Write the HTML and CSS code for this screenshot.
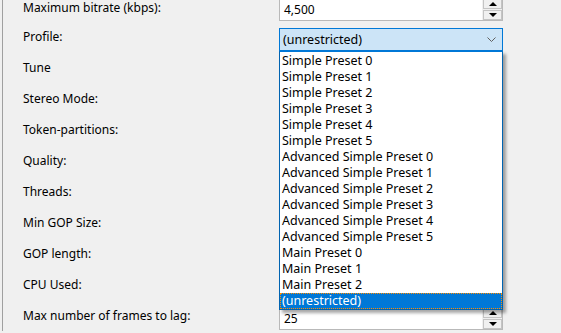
FILE: index.html
```html
<!DOCTYPE html>
<html lang="en">
<head>
    <meta charset="UTF-8">
    <meta name="viewport" content="width=device-width, initial-scale=1.0">
    <title>Encoder Settings</title>
    <link rel="stylesheet" href="styles.css">
</head>
<body>
    <div class="panel">
        <div class="form">
            <div class="row first">
                <label class="label">Maximum bitrate (kbps):</label>
                <div class="spin">
                    <span class="spin-value">4,500</span>
                    <span class="spin-buttons">
                        <span class="spin-btn"><span class="arrow up"></span></span>
                        <span class="spin-btn"><span class="arrow down"></span></span>
                    </span>
                </div>
            </div>
            <div class="row">
                <label class="label">Profile:</label>
                <div class="combo">
                    <div class="combo-head">
                        <span>(unrestricted)</span>
                        <svg class="chevron" width="9" height="5" viewBox="0 0 9 5">
                            <path d="M0.5 0.5 L4.5 4.5 L8.5 0.5" fill="none" stroke="#606060" stroke-width="1"/>
                        </svg>
                    </div>
                    <ul class="combo-list">
                        <li>Simple Preset 0</li>
                        <li>Simple Preset 1</li>
                        <li>Simple Preset 2</li>
                        <li>Simple Preset 3</li>
                        <li>Simple Preset 4</li>
                        <li>Simple Preset 5</li>
                        <li>Advanced Simple Preset 0</li>
                        <li>Advanced Simple Preset 1</li>
                        <li>Advanced Simple Preset 2</li>
                        <li>Advanced Simple Preset 3</li>
                        <li>Advanced Simple Preset 4</li>
                        <li>Advanced Simple Preset 5</li>
                        <li>Main Preset 0</li>
                        <li>Main Preset 1</li>
                        <li>Main Preset 2</li>
                        <li class="selected">(unrestricted)</li>
                    </ul>
                </div>
            </div>
            <div class="row"><label class="label">Tune</label></div>
            <div class="row"><label class="label">Stereo Mode:</label></div>
            <div class="row"><label class="label">Token-partitions:</label></div>
            <div class="row"><label class="label">Quality:</label></div>
            <div class="row"><label class="label">Threads:</label></div>
            <div class="row"><label class="label">Min GOP Size:</label></div>
            <div class="row"><label class="label">GOP length:</label></div>
            <div class="row"><label class="label">CPU Used:</label></div>
            <div class="row">
                <label class="label">Max number of frames to lag:</label>
                <div class="spin">
                    <span class="spin-value">25</span>
                    <span class="spin-buttons">
                        <span class="spin-btn"><span class="arrow up"></span></span>
                        <span class="spin-btn"><span class="arrow down"></span></span>
                    </span>
                </div>
            </div>
        </div>
    </div>
</body>
</html>
```

FILE: styles.css
```css
html, body {
    margin: 0;
    padding: 0;
    height: 100%;
    overflow: hidden;
    background-color: #f0f0f0;
}
body {
    font-family: "Noto Sans", "Liberation Sans", sans-serif;
    font-size: 12px;
    color: #000;
}
.panel {
    margin-left: 2px;
    border-left: 1px solid #a0a0a0;
    height: 100%;
}
.form {
    margin-top: -2px;
    padding-left: 20px;
}
.row {
    display: grid;
    grid-template-columns: 256px 224px;
    align-items: start;
    height: 31px;
}
.row.first {
    height: 30px;
}
.label {
    padding-top: 1px;
    line-height: 16px;
    white-space: nowrap;
}
.row.first .label {
    padding-top: 2px;
}
.spin {
    height: 23px;
    box-sizing: border-box;
    border: 1px solid #b9b9b9;
    background: #fff;
    display: flex;
    align-items: stretch;
}
.spin-value {
    flex: 1;
    padding-left: 4px;
    line-height: 21px;
}
.spin-buttons {
    width: 19px;
    background: #f0f0f0;
    display: flex;
    flex-direction: column;
    gap: 1px;
    padding-left: 1px;
}
.spin-btn {
    flex: 1;
    border: 1px solid #c4c4c4;
    background: #f0f0f0;
    display: flex;
    align-items: center;
    justify-content: center;
}
.arrow {
    width: 0;
    height: 0;
    border-left: 4px solid transparent;
    border-right: 4px solid transparent;
}
.arrow.up {
    border-bottom: 4px solid #000;
}
.arrow.down {
    border-top: 4px solid #000;
}
.combo {
    position: relative;
    height: 23px;
}
.combo-head {
    height: 23px;
    box-sizing: border-box;
    border: 1px solid #0078d7;
    background: #cce4f7;
    display: flex;
    align-items: center;
    justify-content: space-between;
    padding: 0 6px 0 3px;
    font-size: 12.5px;
}
.combo-list {
    position: absolute;
    left: 0;
    top: 23px;
    width: 224px;
    box-sizing: border-box;
    margin: 0;
    padding: 1px 0 0;
    list-style: none;
    background: #fff;
    border: 1px solid #0063b1;
    border-top: 1px solid #0078d7;
    box-shadow: 3px 3px 3px rgba(0, 0, 0, 0.35);
    z-index: 2;
    font-size: 12.5px;
}
.combo-list li {
    height: 16px;
    line-height: 16px;
    padding-left: 2px;
    white-space: nowrap;
}
.combo-list li.selected {
    background: #0078d7;
    color: #fff;
    outline: 1px dotted #ff8c00;
    outline-offset: -1px;
}
```
